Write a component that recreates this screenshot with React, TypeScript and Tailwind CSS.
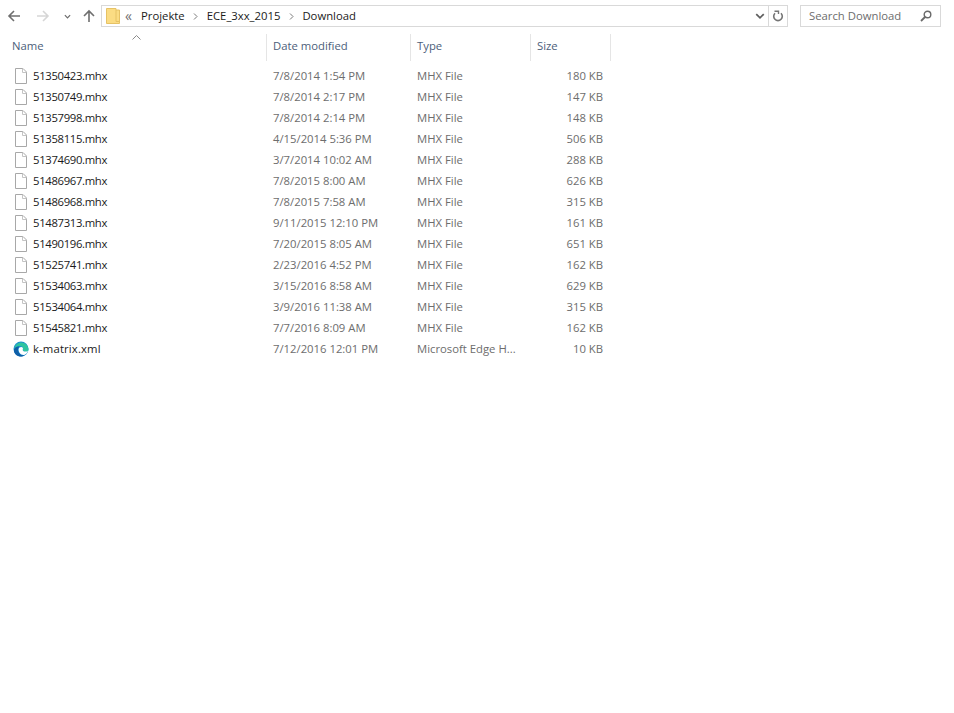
import React from "react";

const files = [
  ["51350423.mhx", "7/8/2014 1:54 PM", "MHX File", "180 KB"],
  ["51350749.mhx", "7/8/2014 2:17 PM", "MHX File", "147 KB"],
  ["51357998.mhx", "7/8/2014 2:14 PM", "MHX File", "148 KB"],
  ["51358115.mhx", "4/15/2014 5:36 PM", "MHX File", "506 KB"],
  ["51374690.mhx", "3/7/2014 10:02 AM", "MHX File", "288 KB"],
  ["51486967.mhx", "7/8/2015 8:00 AM", "MHX File", "626 KB"],
  ["51486968.mhx", "7/8/2015 7:58 AM", "MHX File", "315 KB"],
  ["51487313.mhx", "9/11/2015 12:10 PM", "MHX File", "161 KB"],
  ["51490196.mhx", "7/20/2015 8:05 AM", "MHX File", "651 KB"],
  ["51525741.mhx", "2/23/2016 4:52 PM", "MHX File", "162 KB"],
  ["51534063.mhx", "3/15/2016 8:58 AM", "MHX File", "629 KB"],
  ["51534064.mhx", "3/9/2016 11:38 AM", "MHX File", "315 KB"],
  ["51545821.mhx", "7/7/2016 8:09 AM", "MHX File", "162 KB"],
  ["k-matrix.xml", "7/12/2016 12:01 PM", "Microsoft Edge H...", "10 KB"],
];

function FileIcon() {
  return (
    <svg width="14" height="16" viewBox="0 0 14 16" fill="none" className="shrink-0">
      <path d="M1.5 0.5H9L12.5 4V15.5H1.5Z" fill="#fff" stroke="#a8a8a8" />
      <path d="M8.5 0.5V4.5H12.5" stroke="#c4c4c4" />
    </svg>
  );
}

function EdgeIcon() {
  return (
    <svg width="16" height="16" viewBox="0 0 16 16" className="shrink-0">
      <circle cx="8" cy="8" r="7.5" fill="#1b8fd0" />
      <path d="M1 8.5C1.5 4 5 1.5 8.5 1.5C12 1.5 15.5 4.5 15.5 8.5C15.5 10.5 13.5 11 11.5 10.5C10 10 9.5 9 10 8C10.5 6.5 9 5 7 5C4 5 1.5 6.5 1 8.5Z" fill="#2fc4a0" />
      <path d="M1 8.5C2 6 4.5 5 6.5 5.5C5 6.5 4.5 9 5.5 11C6.5 13.5 9.5 15 12 14C10.5 15.2 9 15.6 8 15.6C4 15.6 0.5 12.5 1 8.5Z" fill="#0f5fa8" />
      <path d="M5.6 8.6C5.6 6.8 7 6 8.2 6C9.6 6 10.4 7 9.8 8.2C9.4 9.4 10.4 10.6 12.6 10.6C13.8 10.6 14.6 10.2 15 9.8C14.4 12.4 12.4 14 10.4 14C7.6 14 5.6 11.4 5.6 8.6Z" fill="#fff" />
    </svg>
  );
}

function Arrow({ dir, color }: { dir: "left" | "right" | "up"; color: string }) {
  const d =
    dir === "left"
      ? "M13 7H2M7 2L2 7L7 12"
      : dir === "right"
        ? "M1 7H12M7 2L12 7L7 12"
        : "M7 13V2M2 7L7 2L12 7";
  return (
    <svg width="14" height="14" viewBox="0 0 14 14" fill="none" className="shrink-0">
      <path d={d} stroke={color} strokeWidth="1.6" />
    </svg>
  );
}

function Chevron({ color = "#6d6d6d", size = 8 }: { color?: string; size?: number }) {
  return (
    <svg width={size} height={size} viewBox="0 0 8 8" fill="none" className="shrink-0">
      <path d="M1 2.5L4 5.5L7 2.5" stroke={color} strokeWidth="1.4" />
    </svg>
  );
}

function Sep() {
  return (
    <svg width="5" height="7" viewBox="0 0 5 7" fill="none" className="shrink-0 mx-[8.5px]">
      <path d="M1 0.5L4 3.5L1 6.5" stroke="#7a7a7a" />
    </svg>
  );
}

export default function App() {
  return (
    <div className="w-[954px] h-[713px] bg-white overflow-hidden text-[11.3px] font-['Open_Sans',sans-serif] text-[#1a1a1a]">
      {/* nav + address */}
      <div className="flex items-center h-[22px] mt-[5px]">
        <div className="ml-[7px] w-[94px] flex items-center">
          <Arrow dir="left" color="#6f6f6f" />
          <div className="w-[15px]" />
          <Arrow dir="right" color="#d6d6d6" />
          <div className="w-[14px]" />
          <Chevron size={7} />
          <div className="w-[11px]" />
          <Arrow dir="up" color="#6f6f6f" />
        </div>
        <div className="w-[687px] h-[22px] border border-[#d9d9d9] flex items-center">
          <svg width="14" height="16" viewBox="0 0 14 16" className="ml-[4px] shrink-0">
            <path d="M0.5 0.5H10V2H13.5V15.5H0.5Z" fill="#fbdc83" stroke="#e6c265" />
            <path d="M10 2V13.5H13.5" fill="none" stroke="#e6c265" />
          </svg>
          <span className="ml-[5px] w-[16px] text-[#6f6f6f] text-[14px] leading-none">«</span>
          <span>Projekte</span>
          <Sep />
          <span>ECE_3xx_2015</span>
          <Sep />
          <span>Download</span>
          <div className="flex-1" />
          <Chevron size={10} color="#5f5f5f" />
          <div className="ml-[3px] w-[19px] h-full border-l border-[#d9d9d9] flex items-center justify-center">
            <svg width="12" height="13" viewBox="0 0 12 13" fill="none">
              <path d="M3 3.2A4.3 4.3 0 1 0 9 3.2" stroke="#757575" strokeWidth="1.6" />
              <path d="M2.5 1.2H6.5V4" stroke="#757575" strokeWidth="1.4" />
            </svg>
          </div>
        </div>
        <div className="ml-[12px] w-[141px] h-[22px] border border-[#d9d9d9] flex items-center pl-[8px] text-[#6d6d6d]">
          <span>Search Download</span>
          <div className="flex-1" />
          <svg width="12" height="12" viewBox="0 0 12 12" fill="none" className="mr-[8px]">
            <circle cx="7.5" cy="4.5" r="3.3" stroke="#6a6a6a" strokeWidth="1.4" />
            <path d="M5 7L1 11" stroke="#6a6a6a" strokeWidth="1.8" />
          </svg>
        </div>
      </div>

      {/* column header */}
      <div className="relative flex mt-[7px] h-[27px] text-[#4c607a]">
        <svg width="9" height="5" viewBox="0 0 9 5" fill="none" className="absolute left-[132px] top-[1px]">
          <path d="M0.5 4.5L4.5 0.5L8.5 4.5" stroke="#8a8a8a" />
        </svg>
        <div className="w-[267px] pl-[12px] pt-[4px] border-r border-[#e5e5e5]">Name</div>
        <div className="w-[144px] pl-[6px] pt-[4px] border-r border-[#e5e5e5]">Date modified</div>
        <div className="w-[120px] pl-[6px] pt-[4px] border-r border-[#e5e5e5]">Type</div>
        <div className="w-[80px] pl-[6px] pt-[4px] border-r border-[#e5e5e5]">Size</div>
      </div>

      {/* rows */}
      <div className="mt-[4px] flex flex-col">
        {files.map(([name, date, type, size]) => (
          <div key={name} className="flex items-center h-[21px] leading-[21px]">
            <div className="w-[267px] flex items-center pl-[13px]">
              <div className="w-[16px] flex justify-center">
                {name.endsWith(".xml") ? <EdgeIcon /> : <FileIcon />}
              </div>
              <span className={name.endsWith(".xml") ? "ml-[4px] tracking-[0.15px]" : "ml-[4px] tracking-[-0.33px]"}>{name}</span>
            </div>
            <div className="w-[144px] pl-[6px] text-[#6d6d6d]">{date}</div>
            <div className="w-[120px] pl-[6px] text-[#6d6d6d]">{type}</div>
            <div className="w-[72px] text-right text-[#6d6d6d]">{size}</div>
          </div>
        ))}
      </div>
    </div>
  );
}
